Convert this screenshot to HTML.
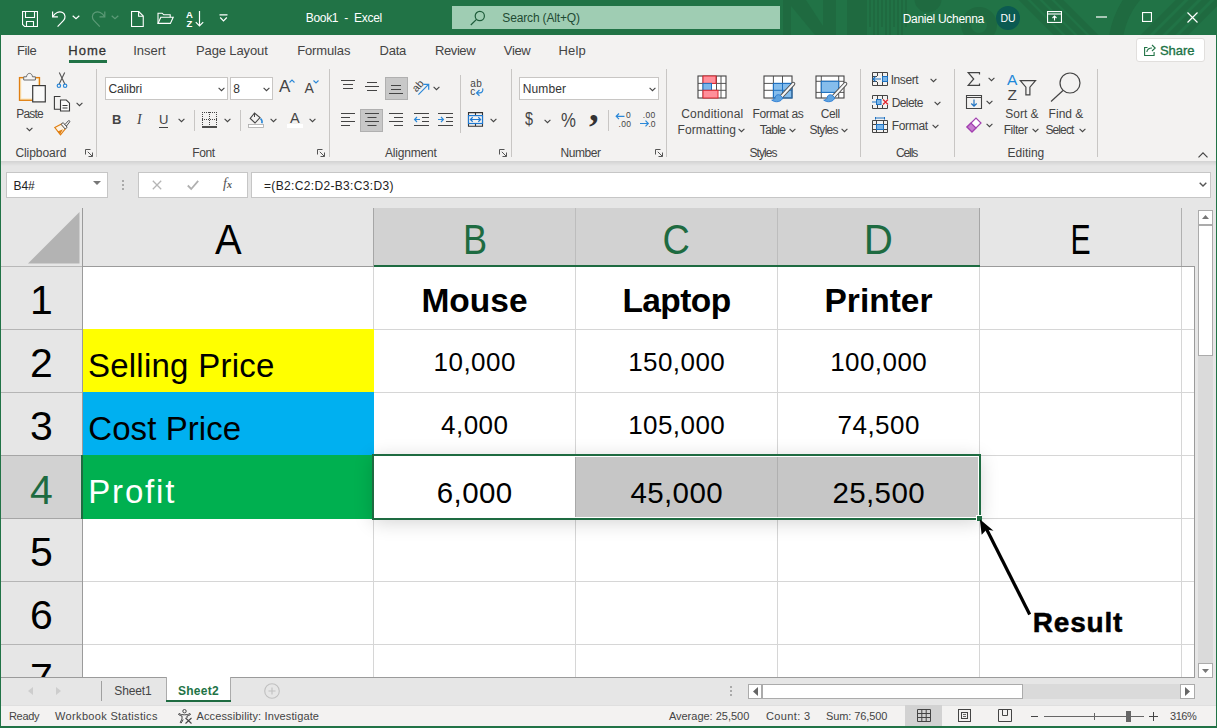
<!DOCTYPE html>
<html><head><meta charset="utf-8"><title>Book1 - Excel</title>
<style>
*{box-sizing:border-box;margin:0;padding:0}
html,body{width:1217px;height:728px;overflow:hidden;background:#e6e6e6;font-family:"Liberation Sans",sans-serif;color:#262626}
.abs,.t{position:absolute}
.t{white-space:nowrap;line-height:1}
#win{position:absolute;left:0;top:0;width:1217px;height:728px;overflow:hidden}
#title{position:absolute;left:0;top:0;width:1217px;height:35px;background:#217346;color:#fff}
#tabs{position:absolute;left:1px;top:35px;width:1215px;height:31px;background:#f3f2f1}
#ribbon{position:absolute;left:1px;top:66px;width:1215px;height:95px;background:#f3f2f1}
#shadow{position:absolute;left:1px;top:161px;width:1215px;height:5px;background:linear-gradient(#d2d2d2,#e6e6e6)}
.sep{position:absolute;width:1px;background:#c8c6c4}
.lbl{font-size:12px;color:#444}
svg{position:absolute;overflow:visible}

.colh{top:219px;font-size:42px;text-align:center;color:#000}
.colh.sel,.rowh.sel{color:#1e6b41}
.rowh{left:1px;width:81px;font-size:41px;text-align:center;color:#000}
.ca{left:87px;font-size:34px;letter-spacing:-0.3px}
.hd{width:201px;text-align:center;font-size:33.5px;font-weight:bold;color:#000}
.num{width:201px;text-align:center;font-size:26px;color:#000;letter-spacing:0.45px;text-indent:0.45px}
.num.big{font-size:29.5px;letter-spacing:0.4px}
.tab{top:9px;font-size:13px;color:#444}
.combo{background:#fff;border:1px solid #c8c6c4}
#rb svg text{font-family:"Liberation Sans",sans-serif}
.st{top:711px;font-size:11px;color:#444}
</style></head><body><div id="win">
<!-- TITLE -->
<div id="title">
<svg style="left:780px;top:0;overflow:hidden" width="437" height="35" viewBox="780 0 437 35">
<g fill="#1f6a40" stroke="none">
<rect x="783" y="0" width="8" height="35"/><polygon points="791,0 806,0 823,26 823,35 815,35 791,6"/><rect x="823" y="0" width="13" height="35"/><rect x="847" y="0" width="20" height="35"/>
<g transform="translate(780 0)"><rect x="89" y="0" width="2" height="27"/><rect x="93" y="0" width="2" height="35"/><rect x="97" y="0" width="2" height="35"/><rect x="101" y="0" width="2" height="27"/><rect x="105" y="0" width="2" height="35"/><rect x="109" y="0" width="2" height="35"/><rect x="113" y="0" width="2" height="27"/><rect x="117" y="0" width="2" height="35"/><rect x="121" y="0" width="2" height="35"/><rect x="125" y="0" width="2" height="27"/></g>
<circle cx="928" cy="-1" r="13.500"/>
</g>
<circle cx="979" cy="25" r="13" fill="none" stroke="#1f6a40" stroke-width="10"/>
<g stroke="#1f6a40" stroke-width="6"><line x1="1018" y1="-5" x2="1063" y2="40"/><line x1="1030" y1="-5" x2="1075" y2="40"/><line x1="1042" y1="-5" x2="1087" y2="40"/><line x1="1054" y1="-5" x2="1099" y2="40"/></g>
<circle cx="1200" cy="50" r="85" fill="none" stroke="#1f6a40" stroke-width="14"/>
<g stroke="#1f6a40" stroke-width="6"><line x1="1185" y1="-5" x2="1140" y2="40"/><line x1="1198" y1="-5" x2="1153" y2="40"/><line x1="1211" y1="-5" x2="1166" y2="40"/><line x1="1224" y1="-5" x2="1179" y2="40"/></g>
</svg>
<!-- save -->
<svg style="left:22px;top:11px" width="16" height="16" viewBox="0 0 16 16" fill="none" stroke="#fff" stroke-width="1.1"><path d="M.55.55h14.9v14.9H2.6L.55 13.4z"/><path d="M3.5.6v5.9h9V.6"/><path d="M4.5 15.4v-4.9h7v4.9"/></svg>
<!-- undo -->
<svg style="left:51px;top:10px" width="18" height="18" viewBox="0 0 18 18" fill="none" stroke="#fff" stroke-width="1.2"><path d="M1.6 1.5v5.3h5.3"/><path d="M1.8 6.6C4 3 8 .6 11.6 2.6c3.300 1.900 2.800 5.800 1 7.700L6.600 16.600"/></svg>
<svg style="left:72px;top:15px" width="8" height="5" viewBox="0 0 8 5" fill="none" stroke="#fff" stroke-width="1.2"><path d="M.7.7 4 3.800 7.300.7"/></svg>
<!-- redo (disabled) -->
<svg style="left:90px;top:10px" width="18" height="18" viewBox="0 0 18 18" fill="none" stroke="#5c9a77" stroke-width="1.2"><path d="M14.800 1.500v5.300H9.500"/><path d="M14.600 6.600C12.400 3 8.400.6 4.800 2.600 1.500 4.500 2 8.400 3.800 10.300l6 6.300"/></svg>
<svg style="left:111px;top:15px" width="8" height="5" viewBox="0 0 8 5" fill="none" stroke="#5c9a77" stroke-width="1.2"><path d="M.7.7 4 3.800 7.300.7"/></svg>
<!-- new -->
<svg style="left:131px;top:11px" width="13" height="16" viewBox="0 0 13 16" fill="none" stroke="#fff" stroke-width="1.1"><path d="M.55.55h7.200l4.500 4.500v10.400H.55z"/><path d="M7.600.6v4.600h4.600"/></svg>
<!-- open -->
<svg style="left:157px;top:12px" width="17" height="13" viewBox="0 0 17 13" fill="none" stroke="#fff" stroke-width="1.1"><path d="M1 11.400V1.200h4.200l1.500 1.600h6.500v2.400"/><path d="M1 11.400 3.800 5.200h12.400L13.400 11.400z"/></svg>
<!-- sort AZ -->
<div id="t1" class="t" style="left:186px;top:10px;font-size:9.5px;font-weight:bold;color:#fff">A</div>
<div id="t2" class="t" style="left:186.500px;top:18.500px;font-size:9.500px;font-weight:bold;color:#fff">Z</div>
<svg style="left:195px;top:11px" width="9" height="16" viewBox="0 0 9 16" fill="none" stroke="#fff" stroke-width="1.2"><path d="M4.500 0v15M.8 11.200l3.700 3.800 3.700-3.800"/></svg>
<!-- customize -->
<svg style="left:219px;top:14px" width="9" height="8" viewBox="0 0 9 8" fill="none" stroke="#fff" stroke-width="1.2"><path d="M.5.8h8M1.200 3.500 4.500 6.800 7.800 3.500"/></svg>
<div class="t" id="ttl" style="left:305.71px;top:11.91px;font-size:12px;color:#fff;letter-spacing:-0.3px">Book1&nbsp; -&nbsp; Excel</div>
<div class="abs" style="left:452px;top:6px;width:328px;height:23px;background:#9fcdb3"></div>
<svg style="left:470px;top:10px" width="16" height="16" viewBox="0 0 16 16" fill="none" stroke="#1e5c3a" stroke-width="1.2"><circle cx="9.800" cy="6" r="4.600"/><path d="M6.500 9.300.8 15"/></svg>
<div class="t" id="srch" style="left:502.3px;top:11.91px;font-size:12px;color:#1f4b33;letter-spacing:-0.15px">Search (Alt+Q)</div>
<div class="t" id="usr" style="left:902.71px;top:12.61px;font-size:12px;color:#fff;letter-spacing:-0.3px">Daniel Uchenna</div>
<div class="abs" style="left:996px;top:6px;width:24px;height:24px;border-radius:50%;background:#0b5a51"></div>
<div id="t3" class="t" style="left:996px;top:12.500px;width:24px;text-align:center;font-size:10.500px;color:#fff">DU</div>
<!-- ribbon display -->
<svg style="left:1047px;top:11px" width="15" height="12" viewBox="0 0 15 12" fill="none" stroke="#fff" stroke-width="1.1"><rect x=".55" y=".55" width="13.900" height="10.900"/><path d="M.5 3h14"/><path d="M7.500 9.500V5M5.500 7l2-2 2 2" /></svg>
<svg style="left:1096px;top:16px" width="11" height="2" viewBox="0 0 11 2"><rect width="11" height="1.200" y=".4" fill="#fff"/></svg>
<svg style="left:1142px;top:12px" width="10" height="10" viewBox="0 0 10 10" fill="none" stroke="#fff" stroke-width="1.100"><rect x=".55" y=".55" width="8.900" height="8.900"/></svg>
<svg style="left:1187px;top:12px" width="11" height="11" viewBox="0 0 11 11" fill="none" stroke="#fff" stroke-width="1.200"><path d="M.5.5l10 10M10.500.5l-10 10"/></svg>
</div>
<!-- TABS -->
<div id="tabs">
<div id="t4" class="t tab" style="left:16px;letter-spacing:-0.37px;top:9px">File</div>
<div id="t5" class="t tab" style="left:67.21px;color:#333;-webkit-text-stroke:0.3px #333;letter-spacing:1.05px;top:9px">Home</div>
<div class="abs" style="left:68px;top:25px;width:38px;height:3px;background:#217346"></div>
<div id="t6" class="t tab" style="left:132.3px;letter-spacing:-0.04px;top:9px">Insert</div>
<div id="t7" class="t tab" style="left:195px;letter-spacing:-0.12px;top:9px">Page Layout</div>
<div id="t8" class="t tab" style="left:296.21px;letter-spacing:-0.14px;top:9px">Formulas</div>
<div id="t9" class="t tab" style="left:378.5px;letter-spacing:-0.24px;top:9px">Data</div>
<div id="t10" class="t tab" style="left:434px;letter-spacing:-0.41px;top:9px">Review</div>
<div id="t11" class="t tab" style="left:502.8px;letter-spacing:-0.35px;top:9px">View</div>
<div id="t12" class="t tab" style="left:557.4px;letter-spacing:0.2px;top:9px">Help</div>
<div class="abs" style="left:1135px;top:3px;width:69px;height:24px;background:#fff;border:1px solid #e1dfdd;border-radius:3px"></div>
<svg style="left:1143px;top:9px" width="12" height="12" viewBox="0 0 12 12" fill="none" stroke="#217346" stroke-width="1.100"><path d="M3.500 3.500H.6v8h9.500V8"/><path d="M2.800 8C3.200 5.300 5.500 4 8 4M8 1l3.200 3L8 7"/></svg>
<div id="t13" class="t" style="left:1158.91px;top:8.61px;font-size:13px;color:#217346;-webkit-text-stroke:0.35px #217346;letter-spacing:-0.04px">Share</div>
</div>
<!-- RIBBON -->
<div id="ribbon"></div>
<div id="rb">
<svg style="left:18px;top:72px" width="29" height="32" viewBox="18 72 29 32" fill="none"><rect x="19.500" y="77.600" width="20" height="22.700" fill="#fbe3b5" stroke="#e07f12" stroke-width="1.300"/><rect x="21.300" y="79" width="16.500" height="19.500" fill="#f8f8f8"/><path d="M23.700 80V76.800h2.800c.2-2 1.400-3.400 3-3.400s2.800 1.400 3 3.400h2.900V80z" fill="#f5f5f5" stroke="#6a6a6a" stroke-width="1"/><rect x="32.700" y="85.600" width="12.600" height="16.300" fill="#fafafa" stroke="#3a3a3a" stroke-width="1.200"/></svg>
<div class="t lbl" id="paste" style="left:16.21px;top:108px;letter-spacing:-0.78px">Paste</div>
<svg style="left:26.0px;top:126.8px" width="7" height="5" viewBox="0 0 7 5" fill="none" stroke="#444" stroke-width="1.100"><path d="M.6.8 3.500 3.700 6.400.8"/></svg>
<svg style="left:56px;top:72px" width="12" height="17" viewBox="56 72 12 17" fill="none"><path d="M59.300 72.500 64.800 84M64.700 72.500 59.200 84" stroke="#555" stroke-width="1.100"/><circle cx="58.900" cy="85.800" r="1.700" stroke="#2b88d8" stroke-width="1.200"/><circle cx="65.100" cy="85.800" r="1.700" stroke="#2b88d8" stroke-width="1.200"/></svg>
<svg style="left:53px;top:95px" width="18" height="18" viewBox="53 95 18 18" fill="none" stroke="#3a3a3a" stroke-width="1.100"><path d="M60.500 96.500H54.400v12.700h6"/><path d="M60.500 100h5.800l3.200 3.200v7.800h-9z" fill="#fafafa"/><path d="M62.500 105.500h5M62.500 108h5" stroke-width="1"/></svg>
<svg style="left:76.1px;top:101.8px" width="7" height="5" viewBox="0 0 7 5" fill="none" stroke="#444" stroke-width="1.100"><path d="M.6.8 3.500 3.700 6.400.8"/></svg>
<svg style="left:53px;top:119px" width="18" height="17" viewBox="53 119 18 17" fill="none"><path d="M54.800 127.500 61.500 124l4 4.500-5 6.300z" fill="#fdf3e4" stroke="#e07f12" stroke-width="1.200"/><path d="M57.500 131.500l5.500-2.200-3 5.300z" fill="#e07f12"/><path d="M61 124.300l2.200-1.700 4 4.700-2 1.700z" fill="#f5f5f5" stroke="#555" stroke-width="1"/><path d="M65 124.500l3.300-3.700c.8-.8 2 .3 1.300 1.200L66.500 126z" fill="#f5f5f5" stroke="#555" stroke-width="1"/></svg>
<div class="t lbl" id="l_clip" style="left:15.4px;top:147px;letter-spacing:-0.05px">Clipboard</div>
<svg style="left:85px;top:149px" width="8" height="8" viewBox="0 0 8 8" fill="none" stroke="#555" stroke-width="1"><path d="M.5 5.500V.5h5"/><path d="M2.800 2.800l4.500 4.500M7.500 3.500v4h-4"/></svg>
<div class="sep" style="left:96px;top:69px;height:88px"></div>
<div class="abs combo" style="left:105px;top:77px;width:123px;height:23px"></div><div id="t14" class="t lbl" style="left:108.4px;top:83px;color:#333;letter-spacing:-0.04px">Calibri</div><svg style="left:218.0px;top:86.8px" width="7" height="5" viewBox="0 0 7 5" fill="none" stroke="#444" stroke-width="1.100"><path d="M.6.8 3.500 3.700 6.400.8"/></svg>
<div class="abs combo" style="left:230px;top:77px;width:43px;height:23px"></div><div id="t15" class="t lbl" style="left:233.21px;top:83px;color:#333;letter-spacing:0px">8</div><svg style="left:263.0px;top:86.8px" width="7" height="5" viewBox="0 0 7 5" fill="none" stroke="#444" stroke-width="1.100"><path d="M.6.8 3.500 3.700 6.400.8"/></svg>
<div id="t16" class="t" style="left:279px;top:78px;font-size:17px;color:#444">A</div><svg style="left:289px;top:79px" width="6" height="4" viewBox="0 0 6 4" fill="none" stroke="#2b88d8" stroke-width="1.100"><path d="M.5 3.500 3 1l2.500 2.500"/></svg>
<div id="t17" class="t" style="left:304.500px;top:81px;font-size:14px;color:#444">A</div><svg style="left:313px;top:80px" width="6" height="4" viewBox="0 0 6 4" fill="none" stroke="#2b88d8" stroke-width="1.100"><path d="M.5.5 3 3 5.500.5"/></svg>
<div id="t18" class="t" style="left:112px;top:113px;font-size:13px;font-weight:bold;color:#444">B</div>
<div id="t19" class="t" style="left:137px;top:113px;font-size:13px;font-style:italic;color:#444;font-family:'Liberation Serif',serif;font-size:14px">I</div>
<div id="t20" class="t" style="left:159px;top:113px;font-size:13px;color:#444;border-bottom:1px solid #444;padding-bottom:1px">U</div><svg style="left:178.1px;top:117.8px" width="7" height="5" viewBox="0 0 7 5" fill="none" stroke="#444" stroke-width="1.100"><path d="M.6.8 3.500 3.700 6.400.8"/></svg>
<div class="sep" style="left:194px;top:110px;height:21px"></div>
<svg style="left:202px;top:112px" width="15" height="16" viewBox="0 0 15 16" fill="none" stroke="#444" stroke-width="1"><path d="M0 .5h15M0 7.500h15" stroke-dasharray="1 1"/><path d="M.5 0v14M7.500 0v14M14.500 0v14" stroke-dasharray="1 1"/><path d="M0 15h15" stroke="#222" stroke-width="1.600" /></svg>
<svg style="left:224.2px;top:117.8px" width="7" height="5" viewBox="0 0 7 5" fill="none" stroke="#444" stroke-width="1.100"><path d="M.6.8 3.500 3.700 6.400.8"/></svg>
<div class="sep" style="left:240px;top:110px;height:21px"></div>
<svg style="left:248px;top:112px" width="17" height="16" viewBox="0 0 17 16" fill="none"><path d="M6.500 1 2.200 6.500 7 11l5-5.500z" stroke="#444" stroke-width="1.100"/><path d="M6.500 1v4" stroke="#444"/><path d="M12.500 6.500c1.500 1.500 2 3 1.300 4.700" stroke="#2b88d8" stroke-width="1.600"/><rect x=".5" y="12.500" width="15" height="3" fill="#fff" stroke="#aaa" stroke-width=".8"/></svg>
<svg style="left:269.8px;top:117.8px" width="7" height="5" viewBox="0 0 7 5" fill="none" stroke="#444" stroke-width="1.100"><path d="M.6.8 3.500 3.700 6.400.8"/></svg>
<div id="t21" class="t" style="left:290px;top:111px;font-size:14.500px;color:#444">A</div><div class="abs" style="left:287px;top:124px;width:16px;height:4px;background:#fff"></div><svg style="left:308.9px;top:117.8px" width="7" height="5" viewBox="0 0 7 5" fill="none" stroke="#444" stroke-width="1.100"><path d="M.6.8 3.500 3.700 6.400.8"/></svg>
<div class="t lbl" id="l_font" style="left:192.21px;top:147px;letter-spacing:-0.39px">Font</div>
<svg style="left:317px;top:149px" width="8" height="8" viewBox="0 0 8 8" fill="none" stroke="#555" stroke-width="1"><path d="M.5 5.500V.5h5"/><path d="M2.800 2.800l4.500 4.500M7.500 3.500v4h-4"/></svg>
<div class="sep" style="left:329px;top:69px;height:88px"></div>
<div class="abs" style="left:385px;top:77px;width:23px;height:23px;background:#c8c8c8;border:1px solid #b0b0b0"></div>
<div class="abs" style="left:360px;top:109px;width:23px;height:23px;background:#c8c8c8;border:1px solid #b0b0b0"></div>
<svg style="left:341px;top:80px" width="14" height="10" viewBox="0 0 14 10" stroke="#444"><path d="M0 .5h14M2 4.500h10M2 8.500h10"/></svg>
<svg style="left:365px;top:82px" width="14" height="10" viewBox="0 0 14 10" stroke="#444"><path d="M2 .5h10M0 4.500h14M2 8.500h10"/></svg>
<svg style="left:389px;top:85px" width="14" height="10" viewBox="0 0 14 10" stroke="#444"><path d="M2 .5h10M2 4.500h10M0 8.500h14"/></svg>
<svg style="left:410px;top:76px" width="22" height="22" viewBox="410 76 22 22" fill="none"><text x="0" y="0" font-size="10.500" fill="#444" stroke="none" font-family="Liberation Sans, sans-serif" transform="translate(416.500 92.500) rotate(-48)">ab</text><path d="M418.400 94.600 428.300 84.700M423.300 84.300h5.400v5.400" stroke="#2b88d8" stroke-width="1.200"/></svg>
<svg style="left:433.2px;top:86.3px" width="7" height="5" viewBox="0 0 7 5" fill="none" stroke="#444" stroke-width="1.100"><path d="M.6.8 3.500 3.700 6.400.8"/></svg>
<div class="sep" style="left:460px;top:75px;height:58px"></div>
<svg style="left:468px;top:78px" width="18" height="19" viewBox="468 78 18 19" fill="none"><text x="470.200" y="87" font-size="10" fill="#444" font-family="Liberation Sans, sans-serif" letter-spacing="0.6">ab</text><text x="470.200" y="94.700" font-size="10" fill="#444" font-family="Liberation Sans, sans-serif">c</text><path d="M482.600 88.400c1 2.500-.7 4.500-3 4.500h-2.800M479.500 90l-3 2.900 3 2.900" stroke="#2b88d8" stroke-width="1.200"/></svg>
<svg style="left:341px;top:113px" width="14" height="14" viewBox="0 0 14 14" stroke="#444"><path d="M0 .5h14M0 4.500h9M0 8.500h14M0 12.500h9"/></svg>
<svg style="left:365px;top:113px" width="14" height="14" viewBox="0 0 14 14" stroke="#444"><path d="M0 .5h14M2.500 4.500h9M0 8.500h14M2.500 12.500h9"/></svg>
<svg style="left:389px;top:113px" width="14" height="14" viewBox="0 0 14 14" stroke="#444"><path d="M0 .5h14M5 4.500h9M0 8.500h14M5 12.500h9"/></svg>
<svg style="left:414px;top:113px" width="15" height="14" viewBox="0 0 15 14" fill="none"><path d="M0 .5h15M8 4.500h7M8 8.500h7M0 12.500h15" stroke="#444"/><path d="M6 6.500H.8M3 4 .6 6.500 3 9" stroke="#2b88d8" stroke-width="1.200"/></svg>
<svg style="left:438px;top:113px" width="15" height="14" viewBox="0 0 15 14" fill="none"><path d="M0 .5h15M8 4.500h7M8 8.500h7M0 12.500h15" stroke="#444"/><path d="M0 6.500h5.200M3 4l2.400 2.500L3 9" stroke="#2b88d8" stroke-width="1.200"/></svg>
<svg style="left:467px;top:111px" width="17" height="17" viewBox="467 111 17 17" fill="none"><path d="M468.500 112.600h14v13.600h-14zM475.500 112.600v3M475.500 123.500v3" stroke="#333" stroke-width="1.100"/><rect x="468.500" y="115.600" width="14" height="7.900" stroke="#1e78d0" stroke-width="1.200" fill="#f3f2f1"/><path d="M470.500 119.500h10M472.700 117.300l-2.300 2.200 2.300 2.200M478.300 117.300l2.300 2.200-2.300 2.200" stroke="#1e78d0" stroke-width="1.200"/></svg>
<svg style="left:490.0px;top:117.8px" width="7" height="5" viewBox="0 0 7 5" fill="none" stroke="#444" stroke-width="1.100"><path d="M.6.8 3.500 3.700 6.400.8"/></svg>
<div class="t lbl" id="l_align" style="left:385px;top:147px;letter-spacing:-0.18px">Alignment</div>
<svg style="left:499px;top:149px" width="8" height="8" viewBox="0 0 8 8" fill="none" stroke="#555" stroke-width="1"><path d="M.5 5.500V.5h5"/><path d="M2.800 2.800l4.500 4.500M7.500 3.500v4h-4"/></svg>
<div class="sep" style="left:511px;top:69px;height:88px"></div>
<div class="abs combo" style="left:519px;top:77px;width:140px;height:23px"></div><div id="t22" class="t lbl" style="left:522.8px;top:83px;color:#333;letter-spacing:0.1px">Number</div><svg style="left:649.2px;top:86.8px" width="7" height="5" viewBox="0 0 7 5" fill="none" stroke="#444" stroke-width="1.100"><path d="M.6.8 3.500 3.700 6.400.8"/></svg>
<div id="t23" class="t" style="left:524.500px;top:111px;font-size:17.500px;color:#444;transform:scaleX(0.82);transform-origin:left">$</div><svg style="left:543.5px;top:118.8px" width="7" height="5" viewBox="0 0 7 5" fill="none" stroke="#444" stroke-width="1.100"><path d="M.6.8 3.500 3.700 6.400.8"/></svg>
<div id="t24" class="t" style="left:561px;top:110.500px;font-size:19.500px;color:#444;transform:scaleX(0.86);transform-origin:left">%</div>
<div id="t25" class="t" style="left:588.500px;top:89.500px;font-size:37px;font-weight:bold;color:#333;font-family:'Liberation Serif',serif;transform:scaleX(1.05);transform-origin:left">,</div>
<div class="sep" style="left:608px;top:110px;height:21px"></div>
<svg style="left:615px;top:111px" width="18" height="17" viewBox="615 111 18 17" fill="none"><path d="M624.500 116.300h-8M619 113.500l-2.800 2.800 2.800 2.800" stroke="#2b88d8" stroke-width="1.200"/><text x="626" y="118.300" font-size="8.500" fill="#444">0</text><text x="618.500" y="126.900" font-size="8.500" fill="#444" textLength="12.500">.00</text></svg>
<svg style="left:639px;top:111px" width="18" height="17" viewBox="639 111 18 17" fill="none"><path d="M640 123.500h8M645.500 120.700l2.800 2.800-2.800 2.800" stroke="#2b88d8" stroke-width="1.200"/><text x="642.800" y="118.300" font-size="8.500" fill="#444" textLength="12.500">.00</text><text x="648.500" y="126.900" font-size="8.500" fill="#444">.0</text></svg>
<div class="t lbl" id="l_num" style="left:560.5px;top:147px;letter-spacing:-0.44px">Number</div>
<svg style="left:655px;top:149px" width="8" height="8" viewBox="0 0 8 8" fill="none" stroke="#555" stroke-width="1"><path d="M.5 5.500V.5h5"/><path d="M2.800 2.800l4.500 4.500M7.500 3.500v4h-4"/></svg>
<div class="sep" style="left:666px;top:69px;height:88px"></div>
<svg style="left:697px;top:75px" width="30" height="24" viewBox="0 0 30 24" fill="none"><rect x="1" y="1" width="28" height="22" fill="#fff"/><path d="M1 8.400h28M1 15.300h28M6 1v22M19.500 1v22M24 1v22" stroke="#555" stroke-width="1"/><rect x="1" y="1" width="28" height="22" stroke="#444" stroke-width="1.100"/><rect x="6" y="1" width="13" height="7.400" fill="#ff8f9a" stroke="#e0272f" stroke-width="1"/><rect x="6" y="8.400" width="8.500" height="6.900" fill="#7ab6ea" stroke="#1e72c2" stroke-width="1"/><rect x="6" y="15.300" width="15" height="7.700" fill="#ff8f9a" stroke="#e0272f" stroke-width="1"/></svg>
<div class="t lbl" id="cf1" style="left:681.21px;top:107.71px;letter-spacing:0.2px">Conditional</div>
<div class="t lbl" id="cf2" style="left:677.5px;top:123.71px;letter-spacing:0.12px">Formatting</div><svg style="left:738.0px;top:128.3px" width="7" height="5" viewBox="0 0 7 5" fill="none" stroke="#444" stroke-width="1.100"><path d="M.6.8 3.500 3.700 6.400.8"/></svg>
<svg style="left:763px;top:75px" width="34" height="29" viewBox="0 0 34 29" fill="none"><rect x="1" y="1" width="28" height="22" fill="#fff"/><rect x="10.400" y="8.400" width="18.600" height="14.600" fill="#85bdec"/><path d="M10.400 15.300h18.600M19.500 8.400v14.600M10.400 8.400h18.600M10.400 8.400v14.600" stroke="#1e72c2" stroke-width="1"/><path d="M1 8.400h9.400M1 15.300h9.400M10.400 1v7.400M19.500 1v7.400" stroke="#555" stroke-width="1"/><rect x="1" y="1" width="28" height="22" stroke="#444" stroke-width="1.100"/><rect x="10.400" y="8.400" width="18.600" height="14.600" stroke="#1e72c2" stroke-width="1"/><path d="M30.300 8.800 18.800 21.200" stroke="#555" stroke-width="4" stroke-linecap="round"/><path d="M30.300 8.800 18.800 21.200" stroke="#f7f7f7" stroke-width="2" stroke-linecap="round"/><path d="M17.200 20.200c-1.900-1.200-5-.3-5 2.300 0 1.500-1.600 2.600-3.500 2.600 3.800 2.900 10 1.800 11-2.300z" fill="#5ea3e0" stroke="#2b7cd3" stroke-width=".9"/></svg>
<div class="t lbl" id="ft1" style="left:752.4px;top:107.71px;letter-spacing:-0.33px">Format as</div>
<div class="t lbl" id="ft2" style="left:759.8px;top:123.71px;letter-spacing:-0.63px">Table</div><svg style="left:788.5px;top:128.3px" width="7" height="5" viewBox="0 0 7 5" fill="none" stroke="#444" stroke-width="1.100"><path d="M.6.8 3.500 3.700 6.400.8"/></svg>
<svg style="left:815px;top:75px" width="34" height="29" viewBox="0 0 34 29" fill="none"><rect x="1" y="1" width="28" height="22" fill="#fff"/><path d="M1 6.300h28M1 17.400h28M6.300 1v22M23.700 1v22" stroke="#555" stroke-width="1"/><rect x="1" y="1" width="28" height="22" stroke="#444" stroke-width="1.100"/><rect x="6.300" y="6.300" width="17.400" height="11.100" fill="#85bdec" stroke="#1e72c2" stroke-width="1.100"/><path d="M30.300 8.800 18.800 21.200" stroke="#555" stroke-width="4" stroke-linecap="round"/><path d="M30.300 8.800 18.800 21.200" stroke="#f7f7f7" stroke-width="2" stroke-linecap="round"/><path d="M17.200 20.200c-1.900-1.200-5-.3-5 2.300 0 1.500-1.600 2.600-3.500 2.600 3.800 2.900 10 1.800 11-2.300z" fill="#5ea3e0" stroke="#2b7cd3" stroke-width=".9"/></svg>
<div class="t lbl" id="cs1" style="left:820.71px;top:107.71px;letter-spacing:-0.44px">Cell</div>
<div class="t lbl" id="cs2" style="left:809.4px;top:123.71px;letter-spacing:-0.7px">Styles</div><svg style="left:841.0px;top:128.3px" width="7" height="5" viewBox="0 0 7 5" fill="none" stroke="#444" stroke-width="1.100"><path d="M.6.8 3.500 3.700 6.400.8"/></svg>
<div class="t lbl" id="l_styles" style="left:749.5px;top:147px;letter-spacing:-0.92px">Styles</div>
<div class="sep" style="left:860px;top:69px;height:88px"></div>
<svg style="left:872px;top:72px" width="16" height="14" viewBox="0 0 16 14" fill="none"><path d="M.5.5h15v13H.5zM.5 4.500h15M.5 9.500h15M5.500.5v13M10.500.5v13" stroke="#444"/><rect x="5" y="4" width="11" height="6" fill="#f3f2f1"/><rect x="10.500" y="4.500" width="5" height="5" fill="#7ab6ea" stroke="#1e72c2"/><path d="M9 7H1M3.500 4.500 1 7l2.500 2.500" stroke="#1e72c2" stroke-width="1.200"/></svg>
<div class="t lbl" id="ins" style="left:890.71px;top:74px;letter-spacing:-0.42px">Insert</div><svg style="left:930.1px;top:77.8px" width="7" height="5" viewBox="0 0 7 5" fill="none" stroke="#444" stroke-width="1.100"><path d="M.6.8 3.500 3.700 6.400.8"/></svg>
<svg style="left:872px;top:95px" width="17" height="14" viewBox="0 0 17 14" fill="none"><path d="M.5.5h15v13H.5zM.5 4.500h15M.5 9.500h15M5.500.5v13M10.500.5v13" stroke="#444"/><rect x="0" y="4" width="17" height="6" fill="#f3f2f1"/><rect x="4.500" y="4.500" width="4.500" height="5" fill="#7ab6ea" stroke="#1e72c2"/><path d="M0 7h4" stroke="#1e72c2"/><path d="M11 4.500l5 5M16 4.500l-5 5" stroke="#e0272f" stroke-width="1.300"/></svg>
<div class="t lbl" id="del" style="left:891.71px;top:97px;letter-spacing:-0.6px">Delete</div><svg style="left:933.8px;top:100.8px" width="7" height="5" viewBox="0 0 7 5" fill="none" stroke="#444" stroke-width="1.100"><path d="M.6.8 3.500 3.700 6.400.8"/></svg>
<svg style="left:872px;top:117px" width="16" height="16" viewBox="0 0 16 16" fill="none"><path d="M.5 3.500h15v12H.5zM.5 7.500h15M.5 12.500h15M4.500 3.500v12M11.500 3.500v12" stroke="#444"/><rect x="4.500" y="7.500" width="7" height="5" fill="#7ab6ea" stroke="#1e72c2"/><path d="M3.500 1h9M3.500 0v2.500M12.500 0v2.500" stroke="#1e72c2"/></svg>
<div class="t lbl" id="fmt" style="left:891.71px;top:120px;letter-spacing:-0.33px">Format</div><svg style="left:932.1px;top:123.8px" width="7" height="5" viewBox="0 0 7 5" fill="none" stroke="#444" stroke-width="1.100"><path d="M.6.8 3.500 3.700 6.400.8"/></svg>
<div class="t lbl" id="l_cells" style="left:895.9px;top:147px;letter-spacing:-1.07px">Cells</div>
<div class="sep" style="left:954px;top:69px;height:88px"></div>
<svg style="left:967px;top:72px" width="14" height="14" viewBox="0 0 14 14" fill="none" stroke="#444" stroke-width="1.200"><path d="M12.500 2.500V.7H1.200l5.500 6.300-5.500 6.300h11.300v-1.800"/></svg><svg style="left:987.7px;top:77.3px" width="7" height="5" viewBox="0 0 7 5" fill="none" stroke="#444" stroke-width="1.100"><path d="M.6.8 3.500 3.700 6.400.8"/></svg>
<svg style="left:966px;top:95px" width="16" height="14" viewBox="0 0 16 14" fill="none"><path d="M.5.5h15v13H.5zM.5 2.500h15" stroke="#444" stroke-width="1.100"/><path d="M8 4.500v6.500M5.300 8.500 8 11.200l2.700-2.700" stroke="#1e72c2" stroke-width="1.200"/></svg><svg style="left:986.1px;top:99.8px" width="7" height="5" viewBox="0 0 7 5" fill="none" stroke="#444" stroke-width="1.100"><path d="M.6.8 3.500 3.700 6.400.8"/></svg>
<svg style="left:966px;top:117px" width="16" height="16" viewBox="0 0 16 16" fill="none"><path d="M1 10l9-9 5 5-9 9z" fill="#fff" stroke="#a23fb0" stroke-width="1.200"/><path d="M1 10l4-4 5 5-4 4z" fill="#c77fd0" stroke="#a23fb0" stroke-width="1.200"/></svg><svg style="left:986.1px;top:123.3px" width="7" height="5" viewBox="0 0 7 5" fill="none" stroke="#444" stroke-width="1.100"><path d="M.6.8 3.500 3.700 6.400.8"/></svg>
<svg style="left:1007px;top:72px" width="30" height="30" viewBox="0 0 30 30" fill="none"><text x="0" y="12.500" font-size="15.500" fill="#1e88d8" font-family="Liberation Sans, sans-serif">A</text><text x="0.500" y="28" font-size="15.500" fill="#444" font-family="Liberation Sans, sans-serif">Z</text><path d="M13.300 8.700h15.200l-5.600 6.500v7.600h-4v-7.600z" stroke="#444" stroke-width="1.200" fill="#f3f2f1"/></svg>
<div class="t lbl" id="sf1" style="left:1005.3px;top:108px;letter-spacing:-0.03px">Sort &amp;</div>
<div class="t lbl" id="sf2" style="left:1003.71px;top:124px;letter-spacing:-0.47px">Filter</div><svg style="left:1031.5px;top:127.8px" width="7" height="5" viewBox="0 0 7 5" fill="none" stroke="#444" stroke-width="1.100"><path d="M.6.8 3.500 3.700 6.400.8"/></svg>
<svg style="left:1050px;top:72px" width="31" height="31" viewBox="0 0 31 31" fill="none" stroke="#444" stroke-width="1.200"><circle cx="20" cy="11" r="10"/><path d="M13 18.500 1 29.500"/></svg>
<div class="t lbl" id="fs1" style="left:1048.6px;top:108px;letter-spacing:0.02px">Find &amp;</div>
<div class="t lbl" id="fs2" style="left:1045.4px;top:124px;letter-spacing:-0.88px">Select</div><svg style="left:1078.5px;top:127.8px" width="7" height="5" viewBox="0 0 7 5" fill="none" stroke="#444" stroke-width="1.100"><path d="M.6.8 3.500 3.700 6.400.8"/></svg>
<div class="t lbl" id="l_edit" style="left:1007.6px;top:147px;letter-spacing:-0px">Editing</div>
<div class="sep" style="left:1097px;top:69px;height:88px"></div>
<svg style="left:1198px;top:152px" width="10" height="6" viewBox="0 0 10 6" fill="none" stroke="#444" stroke-width="1.200"><path d="M.5 5.300 5 .8l4.500 4.500"/></svg>
</div>
<div id="shadow"></div>
<!-- FORMULA -->
<div id="fbar">
<div class="abs" style="left:6px;top:172px;width:102px;height:26px;background:#fff;border:1px solid #c6c6c6"></div>
<div class="t" id="nb" style="left:13.5px;top:180px;font-size:12px;color:#222;letter-spacing:-0.09px">B4#</div>
<svg style="left:93px;top:181px" width="8" height="4" viewBox="0 0 8 4"><polygon points="0,0 8,0 4,4" fill="#777"/></svg>
<div class="abs" style="left:122px;top:180px;width:2px;height:2px;background:#aaa;box-shadow:0 4px 0 #aaa,0 8px 0 #aaa"></div>
<div class="abs" style="left:138px;top:172px;width:110px;height:26px;background:#fff;border:1px solid #c6c6c6"></div>
<svg style="left:152px;top:180px" width="10" height="10" viewBox="0 0 10 10" fill="none" stroke="#b5b5b5" stroke-width="1.300"><path d="M.8.8l8.400 8.400M9.200.8.8 9.200"/></svg>
<svg style="left:187px;top:180px" width="12" height="10" viewBox="0 0 12 10" fill="none" stroke="#b0b0b0" stroke-width="1.800"><path d="M.8 5.500 4.200 9 11.200.8"/></svg>
<div id="t26" class="t" style="left:223px;top:177px;font-size:14px;font-style:italic;color:#555;font-family:'Liberation Serif',serif">f<span style="font-size:10px;font-weight:bold">x</span></div>
<div class="abs" style="left:251px;top:172px;width:960px;height:26px;background:#fff;border:1px solid #c6c6c6"></div>
<div class="t" id="fx" style="left:264px;top:180px;font-size:12px;color:#222;letter-spacing:0.34px">=(B2:C2:D2-B3:C3:D3)</div>
<svg style="left:1199px;top:182px" width="8" height="5" viewBox="0 0 8 5" fill="none" stroke="#555" stroke-width="1.400"><path d="M.7.700 4 4 7.300.7"/></svg>
</div>
<!-- GRID -->
<div id="grid">
<div class="abs" style="left:1px;top:208px;width:1194px;height:59px;background:#e6e6e6"></div>
<div class="abs" style="left:1px;top:267px;width:82px;height:410px;background:#e6e6e6"></div>
<div class="abs" style="left:83px;top:267px;width:1111px;height:410px;background:#fff"></div>
<!-- selected headers -->
<div class="abs" style="left:374px;top:208px;width:605px;height:57px;background:#d2d2d2"></div>
<div class="abs" style="left:1px;top:456px;width:80px;height:62px;background:#d2d2d2"></div>
<!-- corner triangle -->
<svg style="left:28px;top:212px" width="52" height="52"><polygon points="0,51.5 51.5,51.5 51.5,0" fill="#b3b3b3"/></svg>
<!-- header separators -->
<div class="abs" style="left:82px;top:208px;width:1px;height:469px;background:#9b9b9b"></div>
<div class="abs" style="left:373px;top:208px;width:1px;height:58px;background:#a6a6a6"></div>
<div class="abs" style="left:575px;top:208px;width:1px;height:58px;background:#bdbdbd"></div>
<div class="abs" style="left:777px;top:208px;width:1px;height:58px;background:#bdbdbd"></div>
<div class="abs" style="left:979px;top:208px;width:1px;height:58px;background:#a6a6a6"></div>
<div class="abs" style="left:1181px;top:208px;width:1px;height:58px;background:#b0b0b0"></div>
<div class="abs" style="left:1px;top:266px;width:1194px;height:1px;background:#9b9b9b"></div><div class="abs" style="left:1px;top:266px;width:81px;height:1px;background:#b8b8b8"></div>
<!-- row header separators -->
<div class="abs" style="left:1px;top:329px;width:81px;height:1px;background:#b5b5b5"></div>
<div class="abs" style="left:1px;top:392px;width:81px;height:1px;background:#b5b5b5"></div>
<div class="abs" style="left:1px;top:455px;width:81px;height:1px;background:#a6a6a6"></div>
<div class="abs" style="left:1px;top:518px;width:81px;height:1px;background:#a6a6a6"></div>
<div class="abs" style="left:1px;top:581px;width:81px;height:1px;background:#b5b5b5"></div>
<div class="abs" style="left:1px;top:644px;width:81px;height:1px;background:#b5b5b5"></div>
<!-- gridlines -->
<div class="abs" style="left:83px;top:329px;width:1111px;height:1px;background:#d6d6d6"></div>
<div class="abs" style="left:83px;top:392px;width:1111px;height:1px;background:#d6d6d6"></div>
<div class="abs" style="left:83px;top:455px;width:1111px;height:1px;background:#d6d6d6"></div>
<div class="abs" style="left:83px;top:518px;width:1111px;height:1px;background:#d6d6d6"></div>
<div class="abs" style="left:83px;top:581px;width:1111px;height:1px;background:#d6d6d6"></div>
<div class="abs" style="left:83px;top:644px;width:1111px;height:1px;background:#d6d6d6"></div>
<div class="abs" style="left:373px;top:267px;width:1px;height:410px;background:#d6d6d6"></div>
<div class="abs" style="left:575px;top:267px;width:1px;height:410px;background:#d6d6d6"></div>
<div class="abs" style="left:777px;top:267px;width:1px;height:410px;background:#d6d6d6"></div>
<div class="abs" style="left:979px;top:267px;width:1px;height:410px;background:#d6d6d6"></div>
<div class="abs" style="left:1181px;top:267px;width:1px;height:410px;background:#d6d6d6"></div>
<!-- fills -->
<div class="abs" style="left:83px;top:329px;width:291px;height:63px;background:#ffff00"></div>
<div class="abs" style="left:83px;top:392px;width:291px;height:63px;background:#00b0f0"></div>
<div class="abs" style="left:83px;top:455px;width:291px;height:64px;background:#00b050"></div>
<!-- selection -->
<div class="abs" style="left:373px;top:455px;width:607px;height:64px;box-shadow:0 3px 18px rgba(0,0,0,.18)"></div>
<div class="abs" style="left:374px;top:456px;width:605px;height:62px;background:#fff"></div>
<div class="abs" style="left:575px;top:457px;width:403px;height:60px;background:#c6c6c6"></div><div class="abs" style="left:575px;top:457px;width:1px;height:60px;background:#a8a8a8"></div>
<div class="abs" style="left:777px;top:457px;width:1px;height:60px;background:#b0b0b0"></div>
<div class="abs" style="left:372px;top:454px;width:609px;height:66px;border:2px solid #1e6b41"></div>
<div class="abs" style="left:976px;top:515px;width:6px;height:6px;background:#1e6b41;border-left:1px solid #fff;border-top:1px solid #fff"></div>
<!-- green header underline -->
<div class="abs" style="left:374px;top:265px;width:606px;height:2px;background:#1e6b41"></div>
<div class="abs" style="left:81px;top:455px;width:2px;height:64px;background:#1e6b41"></div>
<!-- column letters -->
<div id="t27" class="t colh" style="left:83px;width:290px;transform:translateX(0.3px) scaleX(0.95)">A</div>
<div id="t28" class="t colh sel" style="left:374px;width:201px;transform:translateX(0.6px) scaleX(0.86)">B</div>
<div id="t29" class="t colh sel" style="left:576px;width:201px;transform:translateX(-0.3px) scaleX(0.9)">C</div>
<div id="t30" class="t colh sel" style="left:778px;width:201px;transform:translateX(-0.2px) scaleX(0.96)">D</div>
<div id="t31" class="t colh" style="left:980px;width:201px;transform:translateX(0.1px) scaleX(0.72)">E</div>
<!-- row numbers -->
<div id="t32" class="t rowh" style="top:280.300px">1</div>
<div id="t33" class="t rowh" style="top:343.300px">2</div>
<div id="t34" class="t rowh" style="top:406.300px">3</div>
<div id="t35" class="t rowh sel" style="top:469.500px">4</div>
<div id="t36" class="t rowh" style="top:532.300px">5</div>
<div id="t37" class="t rowh" style="top:595.300px">6</div>
<div id="t38" class="t rowh" style="top:658.300px;height:19px;overflow:hidden">7</div>
<!-- cell text -->
<div id="t39" class="t ca" style="top:348.5px;color:#000;font-size:33px;letter-spacing:0.25px;left:87.91px">Selling Price</div>
<div id="t40" class="t ca" style="top:411.61px;color:#000;font-size:33px;left:88.3px;letter-spacing:0.07px">Cost Price</div>
<div id="t41" class="t ca" style="top:475px;color:#fff;font-size:33px;left:88.3px;letter-spacing:1.81px">Profit</div>
<div id="t42" class="t hd" style="left:374px;top:283.500px">Mouse</div>
<div id="t43" class="t hd" style="left:576px;top:283.500px;letter-spacing:-0.6px">Laptop</div>
<div id="t44" class="t hd" style="left:778px;top:283.500px">Printer</div>
<div id="t45" class="t num" style="left:374px;top:349.200px">10,000</div>
<div id="t46" class="t num" style="left:576px;top:349.200px">150,000</div>
<div id="t47" class="t num" style="left:778px;top:349.200px">100,000</div>
<div id="t48" class="t num" style="left:374px;top:411.900px">4,000</div>
<div id="t49" class="t num" style="left:576px;top:411.900px">105,000</div>
<div id="t50" class="t num" style="left:778px;top:411.900px">74,500</div>
<div id="t51" class="t num big" style="left:374px;top:477.600px">6,000</div>
<div id="t52" class="t num big" style="left:576px;top:477.600px">45,000</div>
<div id="t53" class="t num big" style="left:778px;top:477.600px">25,500</div>
<!-- annotation arrow -->
<svg style="left:0;top:0" width="1217" height="728"><line x1="1029.700" y1="614.500" x2="986" y2="528" stroke="#000" stroke-width="3.200"/><polygon points="979.800,519.200 981.700,534.800 986.600,529.600 993.500,530.800" fill="#000"/></svg>
<div id="t54" class="t" style="left:1032.8px;top:609px;font-size:28px;font-weight:bold;color:#000;letter-spacing:0.81px;-webkit-text-stroke:0.5px #000">Result</div>
<!-- grid border -->
<div class="abs" style="left:1194px;top:267px;width:1px;height:411px;background:#9b9b9b"></div>
<div class="abs" style="left:1px;top:677px;width:1194px;height:1px;background:#9b9b9b"></div>
<!-- vscroll -->
<div class="abs" style="left:1198px;top:225px;width:15px;height:439px;background:#dadada"></div>
<div class="abs" style="left:1198px;top:210px;width:15px;height:15px;background:#fff;border:1px solid #ababab"></div>
<svg style="left:1202px;top:215px" width="7" height="4"><polygon points="0,4 7,4 3.500,0" fill="#777"/></svg>
<div class="abs" style="left:1198px;top:225px;width:15px;height:131px;background:#fff;border:1px solid #ababab"></div>
<div class="abs" style="left:1198px;top:663px;width:15px;height:15px;background:#fff;border:1px solid #ababab"></div>
<svg style="left:1202px;top:669px" width="7" height="4"><polygon points="0,0 7,0 3.500,4" fill="#777"/></svg>
</div>
<!-- SHEETTABS -->
<div id="stabs">
<div class="abs" style="left:1px;top:678px;width:1215px;height:27px;background:#e6e6e6"></div>
<svg style="left:28px;top:687px" width="5" height="8" viewBox="0 0 5 8"><polygon points="5,0 5,8 0,4" fill="#cdcdcd"/></svg>
<svg style="left:56px;top:687px" width="5" height="8" viewBox="0 0 5 8"><polygon points="0,0 0,8 5,4" fill="#cdcdcd"/></svg>
<div class="abs" style="left:101px;top:681px;width:1px;height:20px;background:#a0a0a0"></div>
<div class="t" id="sh1" style="left:114.3px;top:684.5px;font-size:12px;color:#444;letter-spacing:-0.15px">Sheet1</div>
<div class="abs" style="left:166px;top:677px;width:65px;height:24px;background:#fff;border-left:1px solid #ababab;border-right:1px solid #ababab"></div>
<div class="abs" style="left:166px;top:700px;width:65px;height:2px;background:#1e6b41"></div>
<div class="t" id="sh2" style="left:178px;top:684.5px;font-size:12px;font-weight:bold;color:#217346;letter-spacing:0.26px">Sheet2</div>
<svg style="left:264px;top:683px" width="16" height="16" viewBox="0 0 16 16" fill="none" stroke="#c0c0c0" stroke-width="1.100"><circle cx="8" cy="8" r="7.300"/><path d="M8 4.500v7M4.500 8h7"/></svg>
<div class="abs" style="left:730px;top:686px;width:2px;height:2px;background:#aaa;box-shadow:0 4px 0 #aaa,0 8px 0 #aaa"></div>
<div class="abs" style="left:748px;top:684px;width:447px;height:15px;background:#dadada"></div>
<div class="abs" style="left:748px;top:684px;width:14px;height:15px;background:#fff;border:1px solid #ababab"></div>
<svg style="left:753px;top:687px" width="5" height="9" viewBox="0 0 5 9"><polygon points="5,0 5,9 0,4.500" fill="#666"/></svg>
<div class="abs" style="left:762px;top:684px;width:261px;height:15px;background:#fff;border:1px solid #ababab"></div>
<div class="abs" style="left:1180px;top:684px;width:15px;height:15px;background:#fff;border:1px solid #ababab"></div>
<svg style="left:1185px;top:687px" width="5" height="9" viewBox="0 0 5 9"><polygon points="0,0 0,9 5,4.500" fill="#666"/></svg>
</div>
<!-- STATUS -->
<div id="status">
<div class="abs" style="left:1px;top:705px;width:1215px;height:22px;background:#f3f2f1;border-top:1px solid #dfdfdf"></div>
<div class="t st" id="s1" style="left:9px;letter-spacing:-0.32px;top:711px">Ready</div>
<div class="t st" id="s2" style="left:55.1px;letter-spacing:0.33px;top:711px">Workbook Statistics</div>
<svg style="left:178px;top:709px" width="15" height="15" viewBox="0 0 15 15" fill="none" stroke="#444" stroke-width="1"><circle cx="6.500" cy="2.200" r="1.700"/><path d="M1 4.500c1.500 1 3.500 1.300 5.500 1.300s4-.3 5.500-1.300l.5 1c-1 .8-2.500 1.300-3.500 1.500v2M4 7c-1-.2-2.500-.700-3.500-1.500l.5-1M4 7v3l-1.800 3.500 1 .5 2-3.500"/><path d="M7.500 9l6 5.500M13.500 9l-6 5.500" stroke-width="1.100"/></svg>
<div class="t st" id="s3" style="left:196.5px;letter-spacing:0.13px;top:711px">Accessibility: Investigate</div>
<div class="t st" id="s4" style="left:668.9px;letter-spacing:-0.01px;top:711px">Average: 25,500</div>
<div class="t st" id="s5" style="left:766px;letter-spacing:0.36px;top:711px">Count: 3</div>
<div class="t st" id="s6" style="left:826px;letter-spacing:-0.1px;top:711px">Sum: 76,500</div>
<div class="abs" style="left:905px;top:705px;width:37px;height:22px;background:#d2d2d2"></div>
<svg style="left:917px;top:709px" width="14" height="13" viewBox="0 0 14 13" fill="none" stroke="#444" stroke-width="1"><path d="M.5.500h13v12H.5zM.5 4.500h13M.5 8.500h13M4.800.5v12M9.200.5v12"/></svg>
<svg style="left:958px;top:709px" width="13" height="13" viewBox="0 0 13 13" fill="none" stroke="#444" stroke-width="1"><rect x=".5" y=".5" width="12" height="12"/><rect x="3.500" y="3.500" width="6" height="6"/><path d="M5 5.500h3M5 7.500h3" stroke-width=".8"/></svg>
<svg style="left:998px;top:709px" width="14" height="13" viewBox="0 0 14 13" fill="none" stroke="#444" stroke-width="1"><path d="M.5.500h13v12H.5z"/><path d="M4.500.5v6h5v-6"/></svg>
<div class="abs" style="left:1031px;top:716px;width:7px;height:1px;background:#444"></div>
<div class="abs" style="left:1044px;top:716px;width:100px;height:1px;background:#666"></div>
<div class="abs" style="left:1094px;top:713px;width:1px;height:7px;background:#666"></div>
<div class="abs" style="left:1126px;top:711px;width:5px;height:11px;background:#666"></div>
<div class="abs" style="left:1149px;top:716px;width:9px;height:1px;background:#444"></div>
<div class="abs" style="left:1153px;top:712px;width:1px;height:9px;background:#444"></div>
<div class="t st" id="s7" style="left:1170px;letter-spacing:-0.45px;top:711px">316%</div>
</div>
<div class="abs" style="left:0;top:35px;width:1px;height:693px;background:#217346"></div>
<div class="abs" style="left:1216px;top:35px;width:1px;height:693px;background:#217346"></div>
<div class="abs" style="left:0;top:726px;width:1217px;height:2px;background:#217346"></div>
</div></body></html>
